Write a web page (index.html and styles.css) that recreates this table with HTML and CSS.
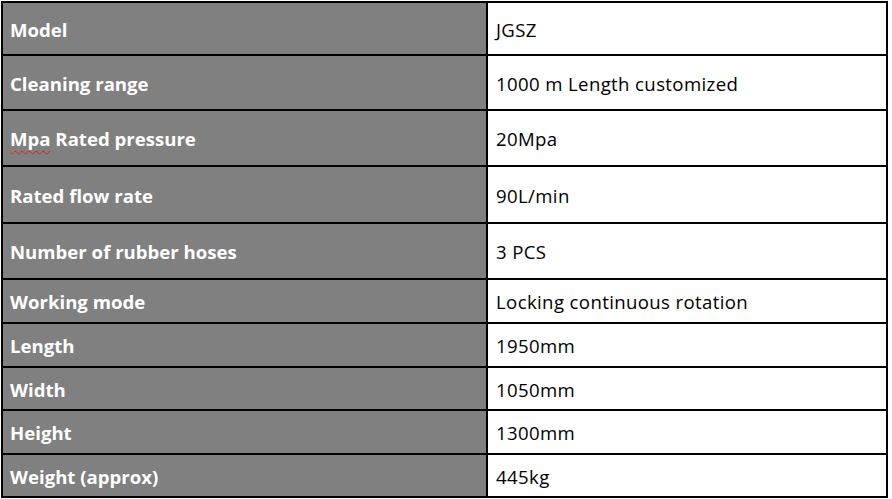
FILE: index.html
```html
<!DOCTYPE html>
<html>
<head>
<meta charset="utf-8">
<link rel="stylesheet" href="styles.css">
</head>
<body>
<div class="spec">
  <div class="k"><span>Model</span></div><div class="v"><span>JGSZ</span></div>
  <div class="k"><span>Cleaning range</span></div><div class="v"><span>1000 m Length customized</span></div>
  <div class="k"><span><span class="typo">Mpa</span> Rated pressure</span></div><div class="v"><span>20Mpa</span></div>
  <div class="k"><span>Rated flow rate</span></div><div class="v"><span>90L/min</span></div>
  <div class="k"><span>Number of rubber hoses</span></div><div class="v"><span>3 PCS</span></div>
  <div class="k"><span>Working mode</span></div><div class="v"><span>Locking continuous rotation</span></div>
  <div class="k"><span>Length</span></div><div class="v"><span>1950mm</span></div>
  <div class="k"><span>Width</span></div><div class="v"><span>1050mm</span></div>
  <div class="k"><span>Height</span></div><div class="v"><span>1300mm</span></div>
  <div class="k"><span>Weight (approx)</span></div><div class="v"><span>445kg</span></div>
</div>
</body>
</html>
```

FILE: styles.css
```css
html, body {
  margin: 0;
  padding: 0;
  background: #fff;
}
.spec {
  margin: 1px 0 0 1px;
  width: 887px;
  box-sizing: border-box;
  padding: 2px;
  background: #000;
  display: grid;
  grid-template-columns: 483px 398px;
  grid-template-rows: 51px 53px 54px 55px 54px 42px 42px 41px 42px 41px;
  gap: 2px;
  font-family: "Open Sans", "Noto Sans", sans-serif;
}
.k, .v {
  display: flex;
  align-items: center;
  padding-top: 1px;
  box-sizing: border-box;
}
.k {
  background: #808080;
  color: #fff;
  font-weight: 700;
  font-size: 18.6px;
  padding-left: 7px;
}
.v {
  background: #fff;
  color: #000;
  font-size: 18.6px;
  letter-spacing: 0.37px;
  padding-left: 8px;
}
.typo {
  text-decoration: underline wavy #e02020;
  text-decoration-thickness: 1px;
  text-underline-offset: 4px;
}
```
